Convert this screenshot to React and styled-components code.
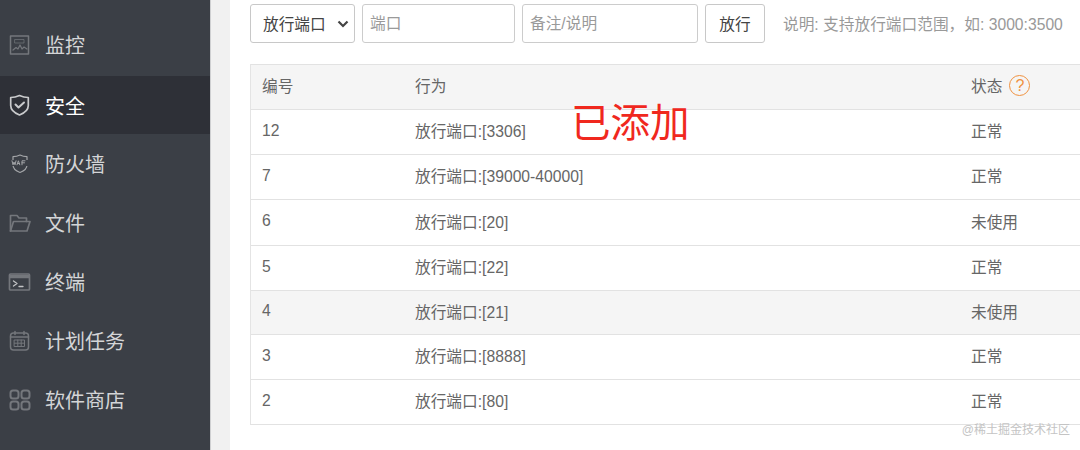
import React from "react";
import styled, { createGlobalStyle } from "styled-components";

const FONT = `"Liberation Sans", "Noto Sans CJK SC", sans-serif`;

const GlobalStyle = createGlobalStyle`
  html, body {
    margin: 0;
    padding: 0;
    background: #fff;
    font-family: ${FONT};
    overflow: hidden;
  }
  * { box-sizing: border-box; }
`;

const Page = styled.div`
  position: relative;
  display: flex;
  width: 1080px;
  height: 450px;
  overflow: hidden;
`;

const Sidebar = styled.nav`
  width: 211px;
  flex-shrink: 0;
  padding-top: 16px;
  background: #3b3f46;
  border-right: 1px solid #cfd0d2;
`;

const NavItem = styled.div`
  display: flex;
  align-items: center;
  height: ${(p) => (p.$active ? 58 : 59)}px;
  padding-left: 8px;
  gap: 13px;
  font-size: 20px;
  color: ${(p) => (p.$active ? "#ffffff" : "#d4d5d7")};
  background: ${(p) => (p.$active ? "#2e3037" : "transparent")};
  svg {
    flex-shrink: 0;
    color: ${(p) => (p.$active ? "#c9cacc" : "#74777c")};
  }
  &:first-child {
    height: 60px;
    padding-bottom: 3px;
  }
`;

const Gutter = styled.div`
  width: 19px;
  flex-shrink: 0;
  background: #f1f1f1;
`;

const Main = styled.main`
  flex: 1;
  min-width: 0;
  padding: 4px 0 0 20px;
  background: #fff;
`;

const FormRow = styled.div`
  display: flex;
  align-items: center;
  gap: 7px;
  height: 39px;
  white-space: nowrap;
`;

const SelectBox = styled.div`
  display: flex;
  align-items: center;
  justify-content: space-between;
  width: 105px;
  height: 39px;
  padding: 0 5px 0 12px;
  border: 1px solid #c8c8c8;
  border-radius: 3px;
  font-size: 15.7px;
  color: #444;
`;

const TextInput = styled.input`
  width: ${(p) => p.$w}px;
  height: 39px;
  padding: 0 7px;
  border: 1px solid #ccc;
  border-radius: 3px;
  outline: none;
  font-family: ${FONT};
  font-size: 15.7px;
  color: #444;
  &::placeholder {
    color: #9a9a9a;
    opacity: 1;
  }
`;

const Button = styled.button`
  width: 60px;
  height: 39px;
  padding: 0;
  background: #fff;
  border: 1px solid #c8c8c8;
  border-radius: 3px;
  font-family: ${FONT};
  font-size: 15.7px;
  color: #444;
`;

const Hint = styled.span`
  margin-left: 11px;
  font-size: 15.7px;
  color: #999;
`;

const Table = styled.div`
  width: 840px;
  margin-top: 21px;
  border-bottom: 1px solid #e2e2e2;
  border-left: 1px solid #e4e4e4;
`;

const Row = styled.div`
  display: grid;
  grid-template-columns: 153px 556px 1fr;
  align-items: center;
  height: ${(p) => p.$h}px;
  padding-left: 11px;
  padding-bottom: 3px;
  border-top: 1px solid #e2e2e2;
  background: ${(p) => (p.$shaded ? "#f5f5f5" : "#fff")};
  font-size: 15.7px;
  color: #666;
`;

const StatusHead = styled.div`
  display: flex;
  align-items: center;
  gap: 7px;
`;

const HelpBadge = styled.span`
  display: flex;
  align-items: center;
  justify-content: center;
  width: 21px;
  height: 21px;
  border: 1.5px solid #f0913f;
  border-radius: 50%;
  font-size: 16px;
  color: #f0913f;
`;

const Stamp = styled.div`
  position: absolute;
  left: 571px;
  top: 100px;
  font-size: 39.500px;
  line-height: 46px;
  color: #f0281e;
`;

const Watermark = styled.div`
  position: absolute;
  right: 10px;
  top: 423px;
  font-size: 12px;
  line-height: 14px;
  color: #c4c4c4;
`;

const Icon = ({ children }) => (
  <svg width="24" height="24" viewBox="0 0 24 24" fill="none" stroke="currentColor" strokeWidth="1.5" strokeLinecap="round" strokeLinejoin="round">
    {children}
  </svg>
);

const MonitorIcon = () => (
  <Icon>
    <rect x="2.500" y="3" width="18" height="18" />
    <path d="M7 6.500h9v3.500H7z" strokeWidth="1" opacity=".7" />
    <path d="M5 17l3-2.500 2 1.500 2-4 2 4 2-2 3 2" strokeWidth="1.200" />
  </Icon>
);

const ShieldIcon = () => (
  <Icon>
    <path d="M11.500 2.500c3 1.400 5.500 2 8.800 2v8c0 4.500-4 7.600-8.800 9.500-4.800-1.900-8.800-5-8.800-9.500v-8c3.300 0 5.800-.6 8.800-2z" strokeWidth="1.700" />
    <path d="M7.500 11.500l3 3 5.500-5" strokeWidth="2" />
  </Icon>
);

const WafIcon = () => (
  <Icon>
    <g color="#a3a5a8">
      <path d="M12 3c2.300 1.100 4.300 1.600 7 1.700V13c0 3.500-3 6-7 7.500-4-1.500-7-4-7-7.500V4.700c2.700-.1 4.700-.6 7-1.700z" strokeWidth="1.200" />
      <rect x="3" y="8" width="18" height="6" fill="#3b3f46" stroke="none" />
      <path d="M4 8.800l1 4 1-2.800 1 2.800 1-4M9 12.800l1.400-4 1.400 4M9.500 11.500h1.800M14 12.800v-4h3M14 10.800h2.500" strokeWidth="1" />
    </g>
  </Icon>
);

const FolderIcon = () => (
  <Icon>
    <path d="M2.500 20V4.500h6.500l2 2.500h7.500v3.500" strokeWidth="1.700" />
    <path d="M2.500 20l3-9.500h16.500L19 20z" strokeWidth="1.700" />
  </Icon>
);

const TerminalIcon = () => (
  <Icon>
    <rect x="1.500" y="4" width="20" height="16" rx="1" strokeWidth="1.700" />
    <path d="M1.500 6.500h20" strokeWidth="3.500" strokeLinecap="butt" />
    <path d="M5.500 11l3.500 2.500-3.500 2.500M11 16.500h4" stroke="#c2c3c5" strokeWidth="1.300" />
  </Icon>
);

const CalendarIcon = () => (
  <Icon>
    <rect x="2.500" y="4" width="18" height="17" rx="3" />
    <path d="M7 2.500v3M16 2.500v3M2.500 8h18" />
    <path d="M6.500 11h10v6.500h-10zM9.800 11v6.500M13.200 11v6.500M6.500 14.200h10" strokeWidth="1" />
  </Icon>
);

const AppsIcon = () => (
  <Icon>
    <rect x="2.500" y="2.500" width="8" height="8" rx="2.500" strokeWidth="2" />
    <rect x="13.500" y="2.500" width="8" height="8" rx="2.500" strokeWidth="2" />
    <rect x="2.500" y="13.500" width="8" height="8" rx="2.500" strokeWidth="2" />
    <rect x="13.500" y="13.500" width="8" height="8" rx="2.500" strokeWidth="2" />
  </Icon>
);

const navItems = [
  { label: "监控", icon: <MonitorIcon /> },
  { label: "安全", icon: <ShieldIcon />, active: true },
  { label: "防火墙", icon: <WafIcon /> },
  { label: "文件", icon: <FolderIcon /> },
  { label: "终端", icon: <TerminalIcon /> },
  { label: "计划任务", icon: <CalendarIcon /> },
  { label: "软件商店", icon: <AppsIcon /> },
];

const rules = [
  { id: 12, port: "3306", status: "正常", h: 45 },
  { id: 7, port: "39000-40000", status: "正常", h: 45 },
  { id: 6, port: "20", status: "未使用", h: 46 },
  { id: 5, port: "22", status: "正常", h: 45 },
  { id: 4, port: "21", status: "未使用", h: 44, shaded: true },
  { id: 3, port: "8888", status: "正常", h: 45 },
  { id: 2, port: "80", status: "正常", h: 45 },
];

export default function App() {
  return (
    <Page>
      <GlobalStyle />
      <Sidebar>
        {navItems.map((item) => (
          <NavItem key={item.label} $active={item.active}>
            {item.icon}
            {item.label}
          </NavItem>
        ))}
      </Sidebar>
      <Gutter />
      <Main>
        <FormRow>
          <SelectBox>
            放行端口
            <svg width="12" height="8" viewBox="0 0 12 8" fill="none" stroke="#444" strokeWidth="2.200">
              <path d="M1.500 1.500L6 6l4.500-4.500" />
            </svg>
          </SelectBox>
          <TextInput $w={153} placeholder="端口" />
          <TextInput $w={176} placeholder="备注/说明" />
          <Button>放行</Button>
          <Hint>说明: 支持放行端口范围，如: 3000:3500</Hint>
        </FormRow>
        <Table>
          <Row $shaded $h={45}>
            <span>编号</span>
            <span>行为</span>
            <StatusHead>
              状态
              <HelpBadge>?</HelpBadge>
            </StatusHead>
          </Row>
          {rules.map((rule) => (
            <Row key={rule.id} $h={rule.h} $shaded={rule.shaded}>
              <span>{rule.id}</span>
              <span>放行端口:[{rule.port}]</span>
              <span>{rule.status}</span>
            </Row>
          ))}
        </Table>
      </Main>
      <Stamp>已添加</Stamp>
      <Watermark>@稀土掘金技术社区</Watermark>
    </Page>
  );
}
